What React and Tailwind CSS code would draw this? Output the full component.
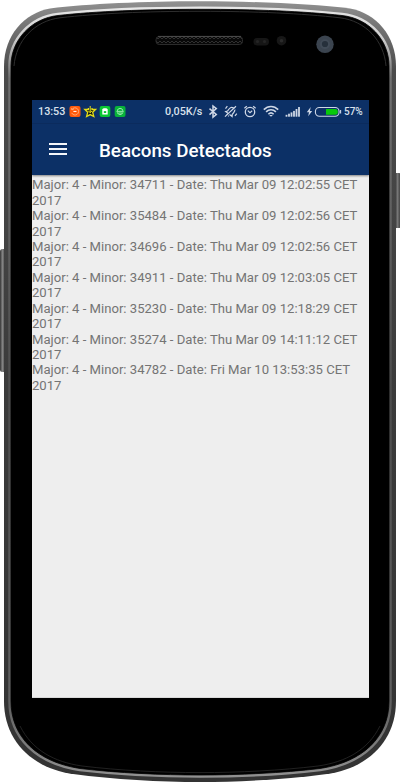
import React from "react";

const beacons = [
  { minor: 34711, date: "Thu Mar 09 12:02:55 CET 2017" },
  { minor: 35484, date: "Thu Mar 09 12:02:56 CET 2017" },
  { minor: 34696, date: "Thu Mar 09 12:02:56 CET 2017" },
  { minor: 34911, date: "Thu Mar 09 12:03:05 CET 2017" },
  { minor: 35230, date: "Thu Mar 09 12:18:29 CET 2017" },
  { minor: 35274, date: "Thu Mar 09 14:11:12 CET 2017" },
  { minor: 34782, date: "Fri Mar 10 13:53:35 CET 2017" },
];

const OUTER =
  "M4 66C4 36 24 13 50 8.5C88 3.8 145 1.3 200 1.3C255 1.3 312 3.8 350 8.5C376 13 396 36 396 66V701C396 740 369 768 327 774C286 779.5 240 782 200 782C160 782 114 779.5 73 774C31 768 4 740 4 701Z";
const INNER =
  "M11 66C11 40 31 18.5 58 15.5C96 11.3 145 9.3 200 9.3C255 9.3 304 11.3 342 15.5C369 18.5 389 40 389 66V701C389 737 363 762 320 768.5C282 773 238 775 200 775C162 775 118 773 80 768.5C37 762 11 737 11 701Z";

function PhoneBody() {
  return (
    <svg className="absolute inset-0" width="400" height="783" viewBox="0 0 400 783" fill="none">
      <defs>
        <linearGradient id="rim" x1="0" y1="0" x2="0" y2="783" gradientUnits="userSpaceOnUse">
          <stop offset="0" stopColor="#929292" />
          <stop offset="0.03" stopColor="#777" />
          <stop offset="0.09" stopColor="#4b4b4b" />
          <stop offset="0.5" stopColor="#3b3b3b" />
          <stop offset="1" stopColor="#333" />
        </linearGradient>
        <linearGradient id="shine" x1="0" y1="0" x2="0" y2="783" gradientUnits="userSpaceOnUse">
          <stop offset="0" stopColor="#eee" />
          <stop offset="0.05" stopColor="#ccc" />
          <stop offset="0.1" stopColor="#707070" />
          <stop offset="0.5" stopColor="#4c4c4c" />
          <stop offset="0.9" stopColor="#606060" />
          <stop offset="1" stopColor="#959595" />
        </linearGradient>
        <linearGradient id="keyL" x1="0" y1="0" x2="6" y2="0" gradientUnits="userSpaceOnUse">
          <stop stopColor="#333" />
          <stop offset="0.4" stopColor="#858585" />
          <stop offset="1" stopColor="#333" />
        </linearGradient>
        <linearGradient id="keyR" x1="395" y1="0" x2="400" y2="0" gradientUnits="userSpaceOnUse">
          <stop stopColor="#333" />
          <stop offset="0.5" stopColor="#777" />
          <stop offset="1" stopColor="#444" />
        </linearGradient>
        <pattern id="mesh" width="4" height="4" patternUnits="userSpaceOnUse">
          <rect width="4" height="4" fill="#080808" />
          <path d="M0 1L2 3L4 1" stroke="#3a3a3a" strokeWidth="0.8" />
        </pattern>
      </defs>
      <rect x="0" y="249" width="8" height="123" rx="2.5" fill="url(#keyL)" />
      <rect x="394" y="173" width="7" height="55" rx="2" fill="url(#keyR)" />
      <path d={OUTER} fill="url(#rim)" />
      <path d={INNER} stroke="url(#shine)" strokeWidth="5.5" />
      <path d={INNER} fill="#000" stroke="#000" strokeWidth="0.8" />
      <path d="M14 66C16 41 34 21 60 17.8C98 13.4 145 11.3 200 11.3C255 11.3 302 13.4 340 17.8C366 21 384 41 386 66" stroke="#333" strokeWidth="0.9" />
      <path d="M20 726C32 750 54 762 82 766C119 770.5 162 772.6 200 772.6C238 772.6 281 770.5 318 766C346 762 368 750 380 726" stroke="#292929" strokeWidth="0.8" />
      <rect x="156" y="36.5" width="86.5" height="8" rx="3.2" fill="url(#mesh)" stroke="#2c2c2c" />
      <path d="M158 36.4H241" stroke="#505050" strokeWidth="0.9" />
      <rect x="253.5" y="38" width="15.5" height="7.5" rx="3.7" fill="#161616" />
      <circle cx="257.5" cy="41.5" r="1.6" fill="#252525" />
      <circle cx="264.5" cy="41.5" r="1.6" fill="#252525" />
      <circle cx="281.5" cy="40.7" r="4.8" fill="#171717" />
      <circle cx="281.5" cy="40.7" r="1.8" fill="#2b2b2b" />
      <circle cx="325" cy="44.3" r="8.7" fill="#3b444f" />
      <circle cx="325" cy="44.3" r="5" fill="#414b57" />
      <circle cx="325" cy="44" r="3.1" fill="#26303b" />
    </svg>
  );
}

function NotificationIcons() {
  return (
    <svg className="ml-[4px] shrink-0" width="58" height="14" viewBox="0.5 0.6 58 14" fill="none">
      <rect x="1" y="1.5" width="11" height="11" rx="2" fill="#ff5a0a" />
      <path d="M3.4 5.2A3.6 3.6 0 1 1 3.2 8.5M3.1 3.7L3.4 5.4L5.2 5" stroke="#ffb27f" strokeWidth="0.9" />
      <path d="M4.9 7H8" stroke="#fff" strokeWidth="1" />
      <path d="M20.2 5.1L16.1 5.3L19.2 7.9L18.1 12.1L21.7 10.2L25.3 12.1L24.2 7.9L27.3 5.3L23.2 5.1Z" fill="#11180f" />
      <path d="M19.9 3.6V5.1H16.3L19.2 7.9L18.1 12.1L21.7 10.2L25.3 12.1L24.2 7.9L27.1 5.1H23.5V3.6" stroke="#e8df16" strokeWidth="1.3" />
      <path d="M21.7 1.6V8M20 6.6L21.7 8.4L23.4 6.6" stroke="#e8df16" strokeWidth="1" />
      <rect x="31.2" y="1.5" width="10.6" height="11" rx="2" fill="#0bc834" />
      <path d="M33.8 5C33.8 3.5 39.2 3.5 39.2 5V10.2H33.8Z" fill="#fff" />
      <path d="M35.3 6.7H37.7V8.6H35.3Z" fill="#0bc834" />
      <rect x="46.2" y="1.5" width="10.8" height="11" rx="2" fill="#08b23a" />
      <path d="M48.9 6.4C48.9 3.3 54.3 3.3 54.3 6.4M48.9 8C49.2 10.8 54 10.8 54.3 8" stroke="#b9f3c5" strokeWidth="0.9" />
      <path d="M48 7H55.2M49.8 8.6H53.4" stroke="#b9f3c5" strokeWidth="0.8" />
    </svg>
  );
}

function SystemIcons() {
  return (
    <svg className="shrink-0" width="136" height="16" viewBox="207 104 136 16" fill="none" stroke="#ced7e6">
      <path d="M209.5 108.6L216.3 114.5L213 117.2V106L216.3 108.6L209.5 114.6" strokeWidth="1.5" />
      <g transform="rotate(38 230.6 111.8)" strokeWidth="1.2">
        <path d="M226.5 114.6L227.7 113V110.2C227.7 108.2 229 107 230.6 107C232.2 107 233.5 108.2 233.5 110.2V113L234.7 114.6Z" />
        <path d="M229.2 116.4H232M224.6 109.4V112.4M236.6 109.4V112.4" />
      </g>
      <path d="M225.6 117.4L236.6 107" stroke="#0c3066" strokeWidth="1.2" />
      <path d="M225 116.6L236 106.2" strokeWidth="1.2" />
      <circle cx="250" cy="112" r="4.7" strokeWidth="1.3" />
      <path d="M247.8 110.6L250 112.6L252.2 110.8M244.4 108.3L246.8 106.2M253.2 106.2L255.6 108.3" strokeWidth="1.2" />
      <g strokeWidth="1.6">
        <path d="M263.8 109.6C268 105.4 274 105.4 278.2 109.6" />
        <path d="M266.1 111.9C268.9 109.1 273.1 109.1 275.9 111.9" />
        <path d="M268.4 114.2C269.9 112.7 272.1 112.7 273.6 114.2" />
      </g>
      <path d="M269.2 115L271 116.8L272.8 115Z" fill="#ced7e6" stroke="none" />
      <g fill="#ced7e6" stroke="none">
        <rect x="285.6" y="114.8" width="1.8" height="1.9" />
        <rect x="288.1" y="113.7" width="1.8" height="3" />
        <rect x="290.6" y="112.4" width="1.8" height="4.3" />
        <rect x="293.1" y="110.9" width="1.8" height="5.8" />
        <rect x="295.6" y="109" width="1.8" height="7.7" />
        <rect x="298.1" y="107" width="1.8" height="9.7" />
        <path d="M310.7 107L306.8 112.2H309L308.2 116.2L312.2 110.9H309.9Z" />
      </g>
      <rect x="315.4" y="107.5" width="23.7" height="8.8" rx="4" strokeWidth="1.1" />
      <path d="M340.6 110V113.6" strokeWidth="1.1" />
      <path d="M326 109H335.6C338.6 109 338.6 114.8 335.6 114.8H326Z" fill="#08c90b" stroke="none" />
    </svg>
  );
}

export default function App() {
  return (
    <div className="relative h-[783px] w-[400px] overflow-hidden bg-white font-['Roboto',sans-serif]">
      <PhoneBody />
      <div className="relative pt-[100px] pl-[32px]">
        <main className="flex h-[598px] w-[336.5px] flex-col overflow-hidden border-b border-[#d9d9d9] bg-[#eeeeee]">
          <div className="flex h-[75px] shrink-0 flex-col bg-[#0c3066] shadow-[0_1px_2px_rgba(0,0,0,0.45)]">
            <div className="flex h-[24px] shrink-0 items-center border-b border-[#0b2b5d] pl-[6px] text-[#d9e0eb]">
              <span className="w-[27px] pt-[2px] text-[10.8px] leading-none font-medium whitespace-nowrap">13:53</span>
              <NotificationIcons />
              <span className="ml-[38px] w-[42px] pt-[2px] text-[10.8px] leading-none font-medium whitespace-nowrap">0,05K/s</span>
              <SystemIcons />
              <span className="ml-[1px] pt-[1px] text-[10px] leading-none font-medium whitespace-nowrap">57%</span>
            </div>
            <header className="flex h-[51px] items-center pl-[17px] text-white">
              <button className="mb-[2px] flex w-[18px] flex-col gap-[3px]" aria-label="Menu">
                <span className="h-[2px] w-full bg-[#f4f6fa]" />
                <span className="h-[2px] w-full bg-[#f4f6fa]" />
                <span className="h-[2px] w-full bg-[#f4f6fa]" />
              </button>
              <h1 className="ml-[32px] pt-[3.5px] text-[18.75px] leading-none font-medium whitespace-nowrap">Beacons Detectados</h1>
            </header>
          </div>
          <ul className="pt-[2.2px] text-[13.12px] leading-[15.43px] text-[#747474]">
            {beacons.map((b) => (
              <li key={b.minor}>{`Major: 4 - Minor: ${b.minor} - Date: ${b.date}`}</li>
            ))}
          </ul>
        </main>
      </div>
    </div>
  );
}
